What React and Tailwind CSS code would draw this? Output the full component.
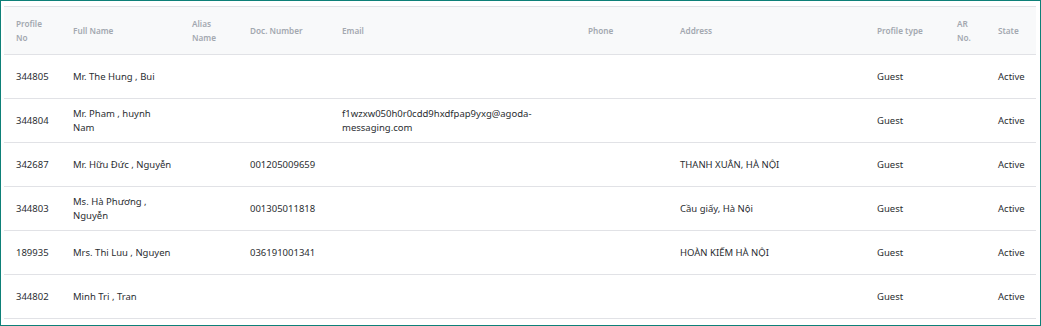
const columns = [
  { label: ["Profile", "No"], w: "w-[57px]" },
  { label: ["Full Name"], w: "w-[119px]" },
  { label: ["Alias", "Name"], w: "w-[58px]" },
  { label: ["Doc. Number"], w: "w-[92px]" },
  { label: ["Email"], w: "w-[246px]" },
  { label: ["Phone"], w: "w-[92px]" },
  { label: ["Address"], w: "w-[197px]" },
  { label: ["Profile type"], w: "w-[80px]" },
  { label: ["AR", "No."], w: "w-[41px]" },
  { label: ["State"], w: "w-[50px]" },
];

const rows = [
  ["344805", "Mr. The Hung , Bui", "", "", "", "", "", "Guest", "", "Active"],
  ["344804", "Mr. Pham , huynh Nam", "", "", "f1wzxw050h0r0cdd9hxdfpap9yxg@agoda-messaging.com", "", "", "Guest", "", "Active"],
  ["342687", "Mr. Hữu Đức , Nguyễn", "", "001205009659", "", "", "THANH XUÂN, HÀ NỘI", "Guest", "", "Active"],
  ["344803", "Ms. Hà Phương , Nguyễn", "", "001305011818", "", "", "Cầu giấy, Hà Nội", "Guest", "", "Active"],
  ["189935", "Mrs. Thi Luu , Nguyen", "", "036191001341", "", "", "HOÀN KIẾM HÀ NỘI", "Guest", "", "Active"],
  ["344802", "Minh Tri , Tran", "", "", "", "", "", "Guest", "", "Active"],
];

export default function App() {
  return (
    <div className="w-[1041px] h-[326px] bg-white border border-[#0e8078] pt-[5px] pl-[3px] pr-[4px] overflow-hidden font-['Noto_Sans',sans-serif]">
      <table className="table-fixed border-collapse w-[1032px]">
        <thead>
          <tr className="bg-[#f8f9fa] border-t border-b border-[#e1e2e6] h-[48px]">
            {columns.map((c, i) => (
              <th
                key={i}
                className={`${c.w} pl-3 pr-1 text-left align-middle text-[8.2px] leading-[14px] font-semibold text-[#a3a8b0]`}
              >
                {c.label.map((l, j) => (
                  <div key={j}>{l}</div>
                ))}
              </th>
            ))}
          </tr>
        </thead>
        <tbody>
          {rows.map((r, i) => (
            <tr key={i} className="border-b border-[#e1e2e6] h-[44px]">
              {r.map((cell, j) => (
                <td
                  key={j}
                  className="pl-3 pr-2 align-middle text-[9.5px] leading-[14px] text-[#2a2d31] break-words"
                >
                  {cell}
                </td>
              ))}
            </tr>
          ))}
        </tbody>
      </table>
    </div>
  );
}
